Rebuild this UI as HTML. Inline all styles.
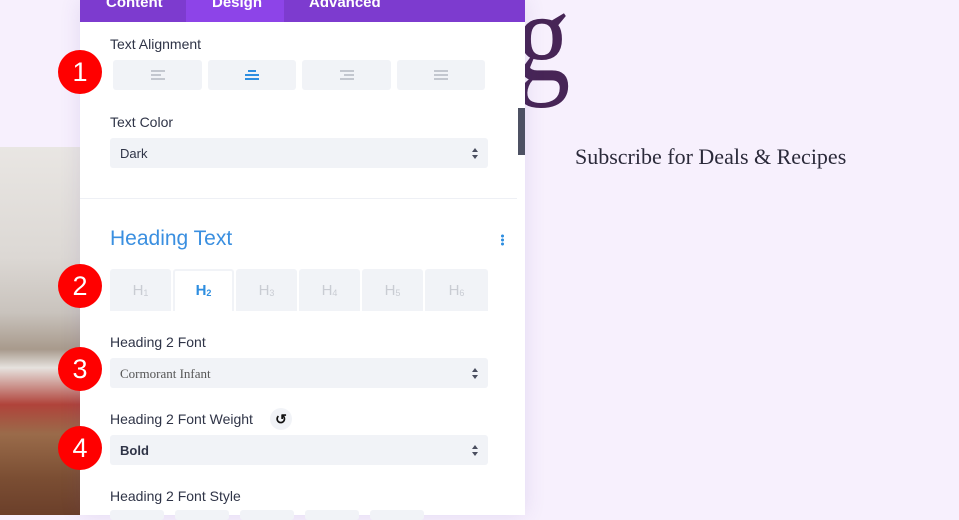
<!DOCTYPE html>
<html><head><meta charset="utf-8"><style>
*{box-sizing:border-box;margin:0;padding:0}
body{width:959px;height:515px;overflow:hidden;background:#f7f0fd;font-family:"Liberation Sans",sans-serif;position:relative}
.photo{position:absolute;left:0;top:147px;width:80px;height:368px;background:linear-gradient(180deg,#e9e6e3 0%,#dcd8d4 30%,#c9c3bd 45%,#a89a8c 55%,#e6e2de 60%,#b0433a 70%,#9a6b4a 78%,#7b4e33 90%,#6b3f2a 100%)}
.panel{position:absolute;left:80px;top:0;width:445px;height:515px;background:#fff;box-shadow:0 0 20px rgba(80,60,160,.12)}
.tabs{height:22px;background:#7d3bcf;position:relative;color:#fff;font-weight:bold;font-size:15px}
.tabs span{position:absolute;top:-6px}
.tabs .act{position:absolute;left:106px;width:98px;height:22px;background:#8d44e8;top:0}
.lbl{position:absolute;left:30px;font-size:14px;color:#2f3447}
.sel{position:absolute;left:30px;width:378px;height:30px;background:#f1f3f7;border-radius:3px;font-size:13px;color:#2f3447;padding:8px 10px}
.sel:after{content:"";position:absolute;right:10px;top:10px;border:3.5px solid transparent;border-bottom:4px solid #4a4e5f;border-top:0;}
.sel:before{content:"";position:absolute;right:10px;top:17px;border:3.5px solid transparent;border-top:4px solid #4a4e5f;border-bottom:0}
.al{position:absolute;top:60px;height:30px;background:#f1f3f7;border-radius:3px}
.al i{position:absolute;left:50%;height:1.5px;background:#c3c7cf}
.h{position:absolute;top:269px;height:42px;background:#f1f3f7;color:#c9ccd3;font-size:15px;text-align:center;padding-top:13px;border-radius:3px 3px 0 0}
.h sub{font-size:9px;vertical-align:-1px}
.badge{position:absolute;left:58px;width:44px;height:44px;border-radius:50%;background:#f00;color:#fff;font-size:27px;text-align:center;line-height:44px;z-index:3}
.sty{position:absolute;top:510px;width:54px;height:10px;background:#f1f3f7;border-radius:3px}
</style></head><body>
<div class="photo"></div>
<div style="position:absolute;left:515px;top:-28px;font-family:'Liberation Serif',serif;font-size:130px;color:#472556;line-height:1;transform:scaleX(0.85);transform-origin:left top">g</div>
<div style="position:absolute;left:575px;top:144px;font-family:'Liberation Serif',serif;font-size:22px;color:#2b2a3a">Subscribe for Deals &amp; Recipes</div>
<div class="panel">
 <div class="tabs"><div class="act"></div><span style="left:26px">Content</span><span style="left:132px">Design</span><span style="left:229px">Advanced</span></div>
 <div class="lbl" style="top:36px">Text Alignment</div>
 <div class="al" style="left:33px;width:89px"><i style="top:10px;width:14px;margin-left:-7px"></i><i style="top:14px;width:10px;margin-left:-7px"></i><i style="top:18px;width:14px;margin-left:-7px"></i></div>
 <div class="al" style="left:128px;width:88px"><i style="top:10px;width:8px;margin-left:-4px;background:#2e8ee0"></i><i style="top:14px;width:14px;margin-left:-7px;background:#2e8ee0"></i><i style="top:18px;width:14px;margin-left:-7px;background:#2e8ee0"></i></div>
 <div class="al" style="left:222px;width:89px"><i style="top:10px;width:14px;margin-left:-7px"></i><i style="top:14px;width:10px;margin-left:-3px"></i><i style="top:18px;width:14px;margin-left:-7px"></i></div>
 <div class="al" style="left:317px;width:88px"><i style="top:10px;width:14px;margin-left:-7px"></i><i style="top:14px;width:14px;margin-left:-7px"></i><i style="top:18px;width:14px;margin-left:-7px"></i></div>
 <div class="lbl" style="top:114px">Text Color</div>
 <div class="sel" style="top:138px">Dark</div>
 <div style="position:absolute;left:438px;top:108px;width:7px;height:47px;background:#4d5163"></div>
 <div style="position:absolute;left:0;top:198px;width:437px;height:1px;background:#eef0f5"></div>
 <div style="position:absolute;left:30px;top:227px;font-size:21px;color:#3a8fe0">Heading Text</div>
 <div style="position:absolute;left:421px;top:234px;width:3px;height:12px;background:radial-gradient(circle,#2e8ee0 1.4px,transparent 1.6px) 0 0/3px 4px"></div>
 <div class="h" style="left:30px;width:61px">H<sub>1</sub></div>
 <div class="h" style="left:93px;width:61px;background:#fff;border:2px solid #f1f3f7;border-bottom:0;color:#2e8ee0;font-weight:bold;padding-top:11px">H<sub>2</sub></div>
 <div class="h" style="left:156px;width:61px">H<sub>3</sub></div>
 <div class="h" style="left:219px;width:61px">H<sub>4</sub></div>
 <div class="h" style="left:282px;width:61px">H<sub>5</sub></div>
 <div class="h" style="left:345px;width:63px">H<sub>6</sub></div>
 <div class="lbl" style="top:334px">Heading 2 Font</div>
 <div class="sel" style="top:358px;font-family:'Liberation Serif',serif;font-size:13px;color:#555">Cormorant Infant</div>
 <div class="lbl" style="top:411px">Heading 2 Font Weight</div>
 <div style="position:absolute;left:190px;top:408px;width:22px;height:22px;border-radius:50%;background:#f1f3f7;font-size:14px;text-align:center;line-height:22px;color:#111;font-weight:bold">↺</div>
 <div class="sel" style="top:435px;font-weight:bold">Bold</div>
 <div class="lbl" style="top:488px">Heading 2 Font Style</div>
 <div class="sty" style="left:30px"></div><div class="sty" style="left:95px"></div><div class="sty" style="left:160px"></div><div class="sty" style="left:225px"></div><div class="sty" style="left:290px"></div>
</div>
<div class="badge" style="top:50px">1</div>
<div class="badge" style="top:264px">2</div>
<div class="badge" style="top:347px">3</div>
<div class="badge" style="top:426px">4</div>
</body></html>
